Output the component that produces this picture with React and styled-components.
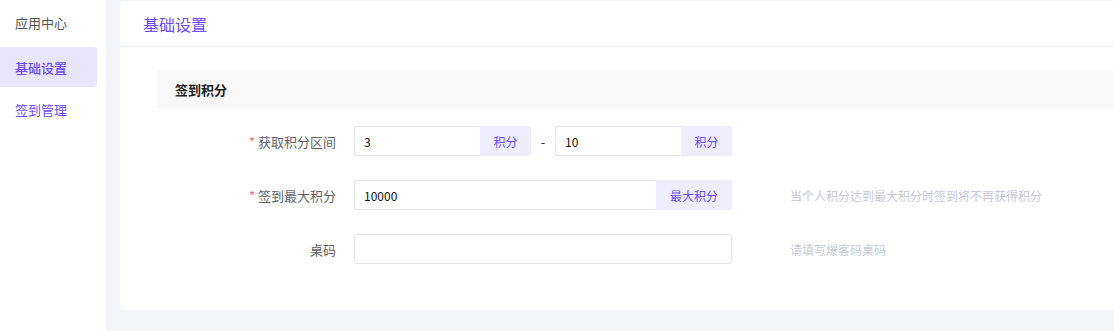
import styled, { createGlobalStyle } from "styled-components";

const GlobalStyle = createGlobalStyle`
  html, body {
    margin: 0;
    padding: 0;
    background: #f4f5f9;
    font-family: "Noto Sans CJK SC", "Noto Sans", sans-serif;
  }
`;

const Layout = styled.div`
  display: flex;
  width: 1114px;
  height: 331px;
  overflow: hidden;
`;

const Sidebar = styled.aside`
  width: 106px;
  flex-shrink: 0;
  background: #fff;
`;

const MenuItem = styled.div`
  width: 97px;
  height: ${(p) => (p.$active ? 40 : 44)}px;
  margin-top: ${(p) => (p.$active ? 3 : 0)}px;
  padding-left: 15px;
  box-sizing: border-box;
  display: flex;
  align-items: center;
  font-size: 13px;
  border-radius: 0 4px 4px 0;
  color: ${(p) => (p.$muted ? "#555" : "#6b4cf6")};
  background: ${(p) => (p.$active ? "#e9e5fd" : "transparent")};
  font-weight: ${(p) => (p.$active ? 500 : 400)};
`;

const Main = styled.main`
  flex: 1;
  padding: 1px 0 21px 14px;
  box-sizing: border-box;
  display: flex;
`;

const Card = styled.section`
  flex: 1;
  background: #fff;
  border-radius: 4px 0 0 4px;
`;

const CardHeader = styled.header`
  height: 45px;
  padding-left: 23px;
  display: flex;
  align-items: center;
  font-size: 16px;
  color: #6b4cf6;
  border-bottom: 1px solid #f0f0f2;
`;

const CardBody = styled.div`
  padding: 23px 0 0 37px;
`;

const SectionBar = styled.div`
  height: 39px;
  background: #f8f8f8;
  border-radius: 3px 0 0 3px;
  padding-left: 18px;
  display: flex;
  align-items: center;
  font-size: 13px;
  font-weight: 600;
  color: #222;
`;

const Form = styled.div`
  padding-top: 17px;
  display: flex;
  flex-direction: column;
  gap: 24px;
`;

const Row = styled.div`
  display: flex;
  align-items: center;
  height: 30px;
`;

const Label = styled.label`
  width: 179px;
  padding-right: 18px;
  text-align: right;
  font-size: 13px;
  color: #606266;
  flex-shrink: 0;
`;

const Star = styled.span`
  color: #f56c6c;
  margin-right: 3px;
`;

const Group = styled.div`
  display: flex;
  width: ${(p) => p.$w}px;
  height: 30px;
  box-sizing: border-box;
`;

const Input = styled.input`
  flex: 1;
  min-width: 0;
  height: 30px;
  box-sizing: border-box;
  border: 1px solid #e4e4e7;
  border-radius: ${(p) => (p.$alone ? "3px" : "3px 0 0 3px")};
  border-right: ${(p) => (p.$alone ? "1px solid #e4e4e7" : "none")};
  padding: 0 9px;
  font-size: 12px;
  font-family: inherit;
  color: #111;
  outline: none;
`;

const Addon = styled.span`
  width: ${(p) => p.$w}px;
  flex-shrink: 0;
  background: #efecfc;
  color: #6b4cf6;
  font-size: 12px;
  display: flex;
  align-items: center;
  justify-content: center;
  border-radius: 0 3px 3px 0;
`;

const Dash = styled.span`
  width: 24px;
  text-align: center;
  font-size: 13px;
  color: #333;
`;

const Hint = styled.span`
  margin-left: 58px;
  font-size: 12px;
  color: #c6c9d6;
`;

export default function App() {
  return (
    <>
      <GlobalStyle />
      <Layout>
        <Sidebar>
          <MenuItem $muted>应用中心</MenuItem>
          <MenuItem $active>基础设置</MenuItem>
          <MenuItem>签到管理</MenuItem>
        </Sidebar>
        <Main>
          <Card>
            <CardHeader>基础设置</CardHeader>
            <CardBody>
              <SectionBar>签到积分</SectionBar>
              <Form>
                <Row>
                  <Label>
                    <Star>*</Star>获取积分区间
                  </Label>
                  <Group $w={177}>
                    <Input defaultValue="3" />
                    <Addon $w={51}>积分</Addon>
                  </Group>
                  <Dash>-</Dash>
                  <Group $w={177}>
                    <Input defaultValue="10" />
                    <Addon $w={51}>积分</Addon>
                  </Group>
                </Row>
                <Row>
                  <Label>
                    <Star>*</Star>签到最大积分
                  </Label>
                  <Group $w={378}>
                    <Input defaultValue="10000" />
                    <Addon $w={76}>最大积分</Addon>
                  </Group>
                  <Hint>当个人积分达到最大积分时签到将不再获得积分</Hint>
                </Row>
                <Row>
                  <Label>桌码</Label>
                  <Group $w={378}>
                    <Input $alone />
                  </Group>
                  <Hint>请填写爆客码桌码</Hint>
                </Row>
              </Form>
            </CardBody>
          </Card>
        </Main>
      </Layout>
    </>
  );
}
